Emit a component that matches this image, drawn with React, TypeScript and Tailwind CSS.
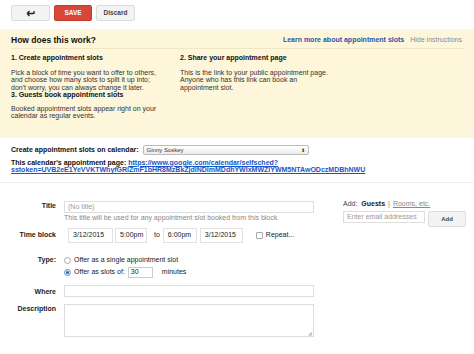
import { useState } from 'react';

const font = { fontFamily: '"Liberation Sans", Arial, sans-serif' };

export default function App() {
  const [type, setType] = useState<'single' | 'slots'>('slots');

  return (
    <div className="w-[474px] h-[354px] bg-white text-[7px] leading-[8px] text-[#222] overflow-hidden" style={font}>
      {/* toolbar */}
      <div className="flex gap-[4px] px-[11px] pt-[5px] pb-[8px]">
        <button className="w-[39px] h-[16px] bg-[#f3f3f3] border border-[#dcdcdc] rounded-[2px] flex items-center justify-center">
          <svg width="9" height="7" viewBox="0 0 9 7">
            <path d="M1 3.5H7.5M1 3.5L3.5 1M1 3.5L3.5 6M8 1v3" stroke="#222" strokeWidth="1.3" fill="none" />
          </svg>
        </button>
        <button className="w-[38px] h-[16px] bg-[#d9473b] border border-[#c53a2e] rounded-[2px] text-white font-bold text-[6.5px]">
          SAVE
        </button>
        <button className="w-[39px] h-[16px] bg-[#f3f3f3] border border-[#dcdcdc] rounded-[2px] text-[#444] font-bold text-[6.5px]">
          Discard
        </button>
      </div>

      {/* instructions */}
      <div className="bg-[#fdf6da] px-[11px] pt-[2px] h-[109px]">
        <div className="h-[18px] flex items-center justify-between border-b border-[#f0e6c2]">
          <div className="font-bold text-[8.5px] leading-[10px] text-[#111]">How does this work?</div>
          <div className="flex gap-[6px] pr-[1px]">
            <span className="font-bold text-[#2b55a8]">Learn more about appointment slots</span>
            <span className="text-[#7d8ca8]">Hide instructions</span>
          </div>
        </div>
        <div className="flex pt-[5px]">
          <div className="w-[169px]">
            <div className="font-bold text-[#111]">1. Create appointment slots</div>
            <p className="mt-[6.5px] text-[#333] leading-[7.5px]">
              Pick a block of time you want to offer to others,<br />
              and choose how many slots to split it up into;<br />
              don't worry, you can always change it later.
            </p>
            <div className="font-bold text-[#111]">3. Guests book appointment slots</div>
            <p className="mt-[5.75px] text-[#333] leading-[7.5px]">
              Booked appointment slots appear right on your<br />
              calendar as regular events.
            </p>
          </div>
          <div className="w-[170px]">
            <div className="font-bold text-[#111]">2. Share your appointment page</div>
            <p className="mt-[6.5px] text-[#333] leading-[7.5px]">
              This is the link to your public appointment page.<br />
              Anyone who has this link can book an<br />
              appointment slot.
            </p>
          </div>
        </div>
      </div>

      {/* calendar section */}
      <div className="px-[11px] pt-[7px] pb-[8px] border-b border-[#efefef]">
        <div className="h-[10px] flex items-center gap-[4px]">
          <span className="font-bold text-[#111]">Create appointment slots on calendar:</span>
          <div className="w-[166px] h-[10px] border border-[#bbb] rounded-[2px] bg-gradient-to-b from-white to-[#ececec] flex items-center justify-between px-[3px] text-[6px] text-[#333]">
            <span>Ginny Soskey</span>
            <span className="text-[5px] leading-[5px]">⬍</span>
          </div>
        </div>
        <div className="mt-[3.75px] font-bold text-[#111] leading-[7.5px]">
          This calendar's appointment page:{' '}
          <a className="text-[#1a54c4] underline">https://www.google.com/calendar/selfsched?</a>
          <br />
          <a className="text-[#1a54c4] underline">sstoken=UVB2eE1YeVVKTWhyfGRlZmF1bHR8MzBkZjdlNDlmMDdhYWIxMWZlYWM5NTAwODczMDBhNWU</a>
        </div>
      </div>

      {/* form */}
      <div className="flex pt-[18px]">
        <div className="w-[320px]">
          <div className="grid grid-cols-[56px_1fr] gap-x-[8px]">
            <div className="font-bold text-right pt-[1px]">Title</div>
            <div>
              <div className="w-[250px] h-[12px] border border-[#ddd] text-[#999] px-[3px] flex items-center">(No title)</div>
              <div className="text-[#888] mt-[1.5px]">This title will be used for any appointment slot booked from this block.</div>
            </div>

            <div className="font-bold text-right mt-[5.5px] h-[15px] flex items-center justify-end">Time block</div>
            <div className="flex items-center mt-[5.5px]">
              <div className="ml-[4px] w-[45px] h-[15px] border border-[#e2e2e2] flex items-center px-[4px]">3/12/2015</div>
              <div className="ml-[2px] w-[32px] h-[15px] border border-[#e2e2e2] flex items-center px-[4px]">5:00pm</div>
              <span className="ml-[7px]">to</span>
              <div className="ml-[3px] w-[34px] h-[15px] border border-[#e2e2e2] flex items-center px-[4px]">6:00pm</div>
              <div className="ml-[3px] w-[43px] h-[15px] border border-[#e2e2e2] flex items-center px-[4px]">3/12/2015</div>
              <span className="ml-[13px] w-[7px] h-[7px] border border-[#aaa] rounded-[1px] bg-white" />
              <span className="ml-[3px]">Repeat...</span>
            </div>

            <div className="font-bold text-right mt-[13.5px]">Type:</div>
            <div className="mt-[13.5px] flex flex-col gap-[2.5px]">
              <label className="flex items-center h-[8px]" onClick={() => setType('single')}>
                <span className="w-[7px] h-[7px] rounded-full border border-[#aaa] flex items-center justify-center">
                  {type === 'single' && <span className="w-[3px] h-[3px] rounded-full bg-[#2f5fb8]" />}
                </span>
                <span className="ml-[3px]">Offer as a single appointment slot</span>
              </label>
              <label className="flex items-center h-[11px]" onClick={() => setType('slots')}>
                <span className="w-[7px] h-[7px] rounded-full border border-[#6d8fd0] bg-[#dfe9fb] flex items-center justify-center">
                  {type === 'slots' && <span className="w-[3px] h-[3px] rounded-full bg-[#2f5fb8]" />}
                </span>
                <span className="ml-[3px]">Offer as slots of:</span>
                <span className="ml-[3px] w-[25px] h-[11px] border border-[#ccc] px-[2px] flex items-center">30</span>
                <span className="ml-[9px]">minutes</span>
              </label>
            </div>

            <div className="font-bold text-right mt-[7px] pt-[3px]">Where</div>
            <div className="mt-[7px] w-[250px] h-[12px] border border-[#ddd]" />

            <div className="font-bold text-right mt-[7px] pt-[1px]">Description</div>
            <div className="mt-[7px] w-[250px] h-[33px] border border-[#ddd] relative">
              <span className="absolute right-[1px] bottom-[0px] text-[5px] leading-[5px] text-[#bbb]">◢</span>
            </div>
          </div>
        </div>

        <div className="ml-[23px]">
          <div className="text-[#444] -mt-[1px]">
            Add: <span className="font-bold text-[#222] ml-[2px]">Guests</span>
            <span className="mx-[3px] text-[#777]">|</span>
            <span className="text-[#888] underline">Rooms, etc.</span>
          </div>
          <div className="flex items-start gap-[3px] mt-[3px]">
            <div className="w-[82px] h-[12px] border border-[#ddd] text-[#999] px-[3px] flex items-center">Enter email addresses</div>
            <button className="w-[38px] h-[16px] bg-[#f3f3f3] border border-[#dcdcdc] rounded-[2px] font-bold text-[6px] text-[#444]">
              Add
            </button>
          </div>
        </div>
      </div>
    </div>
  );
}
